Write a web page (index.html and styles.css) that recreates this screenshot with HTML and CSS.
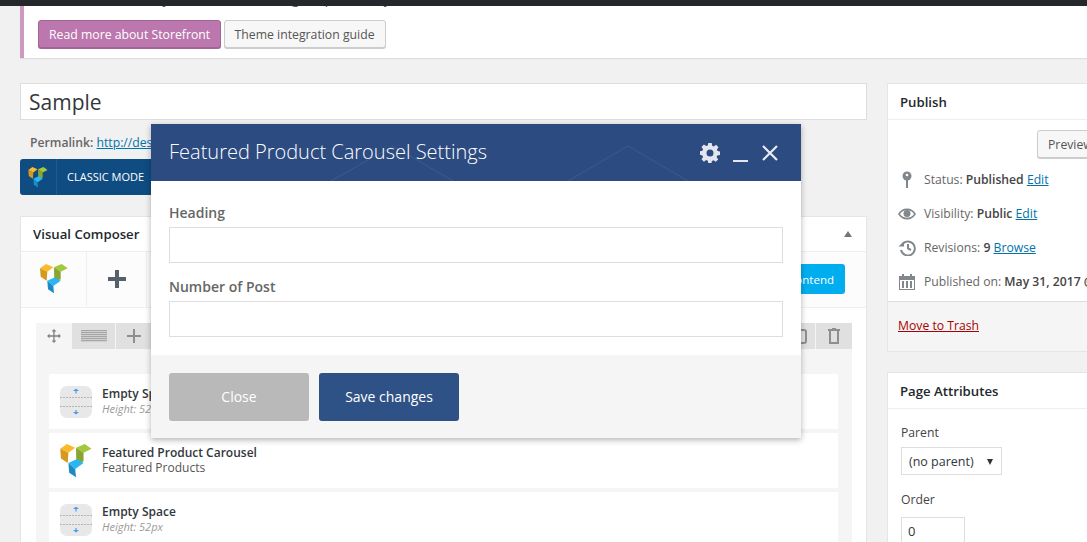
FILE: index.html
```html
<!DOCTYPE html>
<html lang="en">
<head>
    <meta charset="UTF-8">
    <title>Edit Page</title>
    <link rel="stylesheet" href="styles.css">
</head>
<body>
    <div class="adminbar"></div>

    <!-- Theme notice -->
    <div class="notice">
        <div class="notice-clip"><p>While this theme may not include the design in product by default</p></div>
        <a class="btn btn-purple">Read more about Storefront</a>
        <a class="btn">Theme integration guide</a>
    </div>

    <div class="columns">
        <!-- Main column -->
        <div class="main">
            <div class="title-box">Sample</div>
            <div class="permalink"><b>Permalink:</b> <a>http://design.example.com/sample/</a></div>
            <div class="classic-btn">
                <span class="classic-logo">
                    <svg width="20" height="21" viewBox="0 0 28 30"><use href="#vc-logo"/></svg>
                </span>
                <span class="classic-text">CLASSIC MODE</span>
            </div>

            <div class="vc-box">
                <div class="box-head vc-head">
                    <span>Visual Composer</span>
                    <i class="arrow-up"></i>
                </div>
                <div class="vc-toolbar">
                    <span class="vc-tool-logo">
                        <svg width="28" height="30" viewBox="0 0 28 30"><use href="#vc-logo"/></svg>
                    </span>
                    <span class="vc-tool-add">
                        <svg width="18" height="18" viewBox="0 0 18 18"><path d="M7 0h4v7h7v4h-7v7H7v-7H0V7h7z" fill="#55606b"/></svg>
                    </span>
                    <a class="vc-frontend">Frontend</a>
                </div>
                <div class="vc-content">
                    <div class="vc-panel">
                        <div class="vc-tabs">
                            <span class="vc-tab vc-tab-move">
                                <svg width="14" height="14" viewBox="0 0 14 14" fill="none" stroke="#7f7f85" stroke-width="1.300"><path d="M7 1v12M1 7h12"/><path d="M5.500 2.500L7 1l1.500 1.500M5.500 11.500L7 13l1.500-1.500M2.500 5.500L1 7l1.500 1.500M11.500 5.500L13 7l-1.500 1.500"/></svg>
                            </span>
                            <span class="vc-tab vc-tab-lines"><i></i></span>
                            <span class="vc-tab vc-tab-plus">
                                <svg width="14" height="14" viewBox="0 0 14 14"><path d="M6 0h2v6h6v2H8v6H6V8H0V6h6z" fill="#8a8f94"/></svg>
                            </span>
                            <span class="vc-tab vc-tab-copy">
                                <svg width="12" height="16" viewBox="0 0 12 16" fill="none" stroke="#8a8f94" stroke-width="2"><rect x="1" y="2" width="10" height="13" rx="2"/></svg>
                            </span>
                            <span class="vc-tab vc-tab-trash">
                                <svg width="12" height="16" viewBox="0 0 12 16" fill="none" stroke="#8a8f94" stroke-width="2"><path d="M0 2h12M4 1h4M2 3v12h8V3"/></svg>
                            </span>
                        </div>
                        <div class="vc-row">
                            <span class="space-icon"><i class="up"></i><i class="down"></i></span>
                            <div class="vc-row-text"><b>Empty Space</b><em>Height: 52px</em></div>
                        </div>
                        <div class="vc-row">
                            <span class="row-logo">
                                <svg width="32" height="34" viewBox="0 0 28 30"><use href="#vc-logo"/></svg>
                            </span>
                            <div class="vc-row-text"><b>Featured Product Carousel</b><span>Featured Products</span></div>
                        </div>
                        <div class="vc-row">
                            <span class="space-icon"><i class="up"></i><i class="down"></i></span>
                            <div class="vc-row-text"><b>Empty Space</b><em>Height: 52px</em></div>
                        </div>
                    </div>
                </div>
            </div>
        </div>

        <!-- Sidebar -->
        <div class="side">
            <div class="side-box">
                <div class="box-head">Publish</div>
                <div class="publish-top"><a class="btn btn-preview">Preview Changes</a></div>
                <div class="misc">
                    <svg width="12" height="18" viewBox="0 0 12 18"><circle cx="6" cy="5" r="4.500" fill="#82878c"/><circle cx="6" cy="4" r="1.300" fill="#fff"/><path d="M5 8h2v9H5z" fill="#82878c"/></svg>
                    <span>Status: <b>Published</b> <a>Edit</a></span>
                </div>
                <div class="misc">
                    <svg width="18" height="12" viewBox="0 0 18 12"><path d="M0 6c2-3.500 5-5.500 9-5.500S16 2.500 18 6c-2 3.500-5 5.500-9 5.500S2 9.500 0 6z" fill="#82878c"/><path d="M2 6c1.500-2 3-3.500 7-3.500S14.500 4 16 6c-1.500 2-3 3.500-7 3.500S3.500 8 2 6z" fill="#fff"/><circle cx="9" cy="5.500" r="3.500" fill="#82878c"/></svg>
                    <span>Visibility: <b>Public</b> <a>Edit</a></span>
                </div>
                <div class="misc">
                    <svg width="18" height="16" viewBox="0 0 18 16" fill="none" stroke="#82878c" stroke-width="2"><path d="M3.500 5.500A7 7 0 1 1 3 10"/><path d="M10 4v4.500l3 1.500"/><path d="M0.500 6.500h5.500V1.500z" fill="#82878c" stroke="none"/></svg>
                    <span>Revisions: <b>9</b> <a>Browse</a></span>
                </div>
                <div class="misc">
                    <svg width="16" height="16" viewBox="0 0 16 16" fill="#82878c"><path d="M0 2h3V0h2v2h6V0h2v2h3v14H0zm1 4v9h14V6z"/><path d="M3 7h2v7H3zM7 7h2v7H7zM11 7h2v7h-2z"/></svg>
                    <span>Published on: <b>May 31, 2017 @ 10:22</b></span>
                </div>
                <div class="publish-foot"><a class="trash">Move to Trash</a></div>
            </div>

            <div class="side-box attrs">
                <div class="box-head">Page Attributes</div>
                <div class="attrs-body">
                    <div class="attr-label">Parent</div>
                    <div class="fake-select">(no parent)<i></i></div>
                    <div class="attr-label order-label">Order</div>
                    <div class="fake-input">0</div>
                </div>
            </div>
        </div>
    </div>

    <!-- Settings dialog -->
    <div class="modal">
        <div class="modal-head">
            <svg class="modal-pattern" width="650" height="57" viewBox="0 0 650 57" fill="none" stroke="#3d5b8e"><path d="M180 57l62-35 60 35M417 57l60-35 60 35"/></svg>
            <h2>Featured Product Carousel Settings</h2>
            <div class="modal-icons">
                <svg width="20" height="20" viewBox="0 0 20 20"><path fill="#e3e6ee" fill-rule="evenodd" d="M8.300 0h3.400l.5 2.700 1.600.7 2.300-1.600 2.400 2.400-1.600 2.300.7 1.600 2.400.5v3.400l-2.700.5-.7 1.600 1.600 2.300-2.400 2.400-2.300-1.600-1.600.7-.5 2.600H8.300l-.5-2.700-1.600-.7-2.300 1.600-2.400-2.400 1.600-2.300-.7-1.600L0 11.700V8.300l2.400-.5.7-1.600-1.600-2.300 2.400-2.400 2.300 1.600 1.600-.7zM10 6.500a3.500 3.500 0 1 0 0 7 3.500 3.500 0 0 0 0-7z"/></svg>
                <i class="icon-min"></i>
                <svg width="16" height="16" viewBox="0 0 16 16" stroke="#e8ebf2" stroke-width="2.200"><path d="M1 1l14 14M15 1L1 15"/></svg>
            </div>
        </div>
        <div class="modal-body">
            <label>Heading</label>
            <div class="modal-input"></div>
            <label>Number of Post</label>
            <div class="modal-input"></div>
        </div>
        <div class="modal-foot">
            <a class="modal-btn modal-close">Close</a>
            <a class="modal-btn modal-save">Save changes</a>
        </div>
    </div>

    <!-- Visual Composer logo used in several places -->
    <svg class="defs" width="0" height="0">
        <symbol id="vc-logo" viewBox="0 0 28 30">
            <path d="M0 4.300L6 0l7.300 3.300-6 4.400z" fill="#fdb92c"/>
            <path d="M0 4.300l7.300 3.400-.6 9-6-4z" fill="#d39a1f"/>
            <path d="M14 3.300L21.700 0l6 4.300-7 3.400z" fill="#a2c83e"/>
            <path d="M14 3.300l6.700 4.400v7.600L14.300 18z" fill="#8aa52f"/>
            <path d="M7.300 16.700l7.700-3.400 5.700 3.400-7.400 5.300z" fill="#2bb6f0"/>
            <path d="M7.300 16.700l6 5.300.7 7.300-6-4z" fill="#1a8bc4"/>
        </symbol>
    </svg>
</body>
</html>
```

FILE: styles.css
```css
body {
    margin: 0;
    height: 542px;
    overflow: hidden;
    position: relative;
    background-color: #f1f1f1;
    font-family: "Open Sans", sans-serif;
    font-size: 13px;
    line-height: 18px;
    color: #444;
}

a {
    color: #0073aa;
    text-decoration: underline;
}

b {
    font-weight: 600;
}

.defs {
    position: absolute;
}

.adminbar {
    height: 6px;
    background-color: #23282d;
}

/* Notice */
.notice {
    margin-left: 20px;
    height: 52px;
    width: 1100px;
    box-sizing: border-box;
    padding-left: 14px;
    background-color: #fff;
    border-left: 4px solid #cc99c2;
    box-shadow: 0 1px 1px rgba(0, 0, 0, 0.08);
}

.notice-clip {
    height: 14px;
    overflow: hidden;
}

.notice-clip p {
    margin: -16px 0 0;
    white-space: nowrap;
}

.btn {
    display: inline-block;
    box-sizing: border-box;
    height: 28px;
    line-height: 27px;
    padding: 0 10px;
    border: 1px solid #ccc;
    border-radius: 3px;
    background-color: #f7f7f7;
    box-shadow: 0 1px 0 #ccc;
    color: #555;
    font-size: 12.250px;
    text-decoration: none;
    vertical-align: top;
    white-space: nowrap;
}

.btn-purple {
    margin-right: -1px;
    background-color: #bb77ae;
    border-color: #a36597;
    box-shadow: 0 1px 0 #a36597;
    color: #fff;
}

/* Columns */
.columns {
    display: flex;
    gap: 20px;
    margin: 25px 0 0 20px;
    width: 1100px;
}

.main {
    width: 847px;
    flex: none;
}

.side {
    width: 260px;
    flex: none;
}

.title-box {
    height: 37px;
    line-height: 37px;
    box-sizing: border-box;
    padding-left: 8px;
    background-color: #fff;
    border: 1px solid #ddd;
    font-size: 21px;
    color: #32373c;
}

.permalink {
    margin: 14px 0 -1px 10px;
    color: #666;
    font-size: 12.200px;
    white-space: nowrap;
}

.classic-btn {
    display: flex;
    align-items: stretch;
    width: 160px;
    height: 36px;
    margin-top: 8px;
    background-color: #0f4c81;
    border-radius: 3px;
    color: #fff;
    font-size: 11px;
}

.classic-logo {
    width: 36px;
    display: flex;
    align-items: center;
    justify-content: center;
    border-right: 1px solid #1c5a90;
}

.classic-text {
    line-height: 36px;
    padding-left: 10px;
}

/* Visual Composer box */
.vc-box {
    margin-top: 21px;
    height: 340px;
    background-color: #fff;
    border: 1px solid #e5e5e5;
    box-sizing: border-box;
}

.box-head {
    position: relative;
    height: 35px;
    line-height: 37px;
    padding-left: 12px;
    border-bottom: 1px solid #eee;
    font-size: 13.200px;
    font-weight: 600;
    color: #23282d;
}

.vc-head {
    height: 34px;
    line-height: 34px;
}

.arrow-up {
    position: absolute;
    right: 14px;
    top: 14px;
    border: 4px solid transparent;
    border-top: 0;
    border-bottom: 6px solid #72777c;
}

.vc-toolbar {
    display: flex;
    height: 56px;
    box-sizing: border-box;
    background-color: #fcfcfc;
    border-bottom: 1px solid #f0f0f0;
}

.vc-tool-logo,
.vc-tool-add {
    display: flex;
    align-items: center;
    justify-content: center;
    padding-bottom: 2px;
    box-sizing: border-box;
    border-right: 1px solid #f0f0f0;
}

.vc-tool-logo {
    width: 66px;
}

.vc-tool-add {
    width: 60px;
}

.vc-frontend {
    margin: 12px 21px 0 auto;
    height: 30px;
    line-height: 32px;
    padding: 0 11px;
    background-color: #00aef0;
    border-radius: 3px;
    color: #fff;
    font-size: 11.500px;
    text-decoration: none;
}

.vc-content {
    padding: 15px 14px 0 15px;
}

.vc-panel {
    background-color: #f5f5f5;
    height: 220px;
}

.vc-tabs {
    display: flex;
    height: 26px;
    margin-bottom: 25px;
}

.vc-tab {
    display: flex;
    align-items: center;
    justify-content: center;
    background-color: #e0e0e0;
    margin-right: 1px;
}

.vc-tab-move {
    width: 36px;
    margin-right: 0;
    background-color: transparent;
}

.vc-tab-lines {
    width: 43px;
}

.vc-tab-lines i {
    width: 26px;
    height: 12px;
    background: repeating-linear-gradient(#a5a5a5 0 1px, #d0d0d0 1px 2px);
}

.vc-tab-plus {
    width: 35px;
}

.vc-tab-copy {
    width: 29px;
    margin-left: auto;
}

.vc-tab-trash {
    width: 36px;
    margin-right: 0;
}

.vc-row {
    display: flex;
    align-items: center;
    height: 55px;
    margin: 0 14px 4px 13px;
    padding-left: 11px;
    background-color: #fff;
}

.vc-row-text {
    margin: -2px 0 0 10px;
    line-height: 15px;
    font-size: 12px;
    color: #555;
}

.vc-row-text b {
    display: block;
    color: #32373c;
    font-weight: 600;
}

.vc-row-text em {
    display: block;
    color: #999;
    font-size: 11px;
}

.row-logo {
    width: 32px;
    display: flex;
}

.space-icon {
    position: relative;
    width: 32px;
    height: 32px;
    border-radius: 7px;
    background:
        repeating-linear-gradient(90deg, #b5b5b5 0 2px, transparent 2px 3px) 0 11px / 100% 1px no-repeat,
        repeating-linear-gradient(90deg, #b5b5b5 0 2px, transparent 2px 3px) 0 20px / 100% 1px no-repeat,
        #e8e8e8;
}

.space-icon i {
    position: absolute;
    left: 13px;
    width: 6px;
    height: 5px;
    background-color: #4a9bee;
}

.space-icon .up {
    top: 3px;
    clip-path: polygon(50% 0, 100% 50%, 60% 50%, 60% 100%, 40% 100%, 40% 50%, 0 50%);
}

.space-icon .down {
    bottom: 3px;
    clip-path: polygon(40% 0, 60% 0, 60% 50%, 100% 50%, 50% 100%, 0 50%, 40% 50%);
}

/* Sidebar */
.side-box {
    background-color: #fff;
    border: 1px solid #e5e5e5;
    box-sizing: border-box;
}

.publish-top {
    height: 43px;
    padding: 10px 0 0 149px;
    box-sizing: border-box;
}

.misc {
    display: flex;
    align-items: center;
    height: 34px;
    padding-left: 10px;
}

.misc svg {
    width: 18px;
    flex: none;
    margin-right: 8px;
}

.misc span {
    white-space: nowrap;
    font-size: 12.200px;
    color: #666;
}

.misc b {
    color: #444;
}

.publish-foot {
    margin-top: 2px;
    height: 50px;
    box-sizing: border-box;
    padding: 15px 0 0 10px;
    background-color: #f5f5f5;
    border-top: 1px solid #ddd;
    font-size: 12.200px;
}

.trash {
    color: #a00;
}

.attrs {
    margin-top: 20px;
    height: 200px;
}

.attrs-body {
    padding: 15px 0 0 13px;
}

.attr-label {
    color: #444;
    font-size: 12.200px;
}

.order-label {
    margin-top: 16px;
}

.fake-select {
    position: relative;
    width: 101px;
    height: 28px;
    box-sizing: border-box;
    margin-top: 5px;
    padding-left: 7px;
    line-height: 27px;
    background-color: #fff;
    border: 1px solid #ddd;
    font-size: 12.500px;
    color: #32373c;
}

.fake-select i {
    position: absolute;
    right: 8px;
    top: 11px;
    border: 3.500px solid transparent;
    border-bottom: 0;
    border-top: 6px solid #333;
}

.fake-input {
    width: 64px;
    height: 32px;
    box-sizing: border-box;
    margin-top: 8px;
    padding-left: 6px;
    line-height: 26px;
    background-color: #fff;
    border: 1px solid #ddd;
    color: #32373c;
}

/* Modal */
.modal {
    position: absolute;
    left: 151px;
    top: 124px;
    width: 650px;
    background-color: #fff;
    box-shadow: 0 2px 6px rgba(0, 0, 0, 0.3);
}

.modal-head {
    position: relative;
    display: flex;
    align-items: center;
    justify-content: space-between;
    height: 57px;
    padding: 0 23px 0 18px;
    background-color: #2c4b80;
}

.modal-pattern {
    position: absolute;
    left: 0;
    top: 0;
}

.modal-head h2 {
    position: relative;
    margin: -2px 0 0;
    font-size: 20px;
    font-weight: 300;
    color: #fff;
}

.modal-icons {
    position: relative;
    display: flex;
    align-items: center;
    gap: 13px;
}

.icon-min {
    width: 15px;
    height: 2px;
    margin: 16px 1px 0 0;
    background-color: #e3e6ee;
}

.modal-body {
    height: 174px;
    box-sizing: border-box;
    padding: 23px 18px 0;
}

.modal-body label {
    display: block;
    font-size: 14px;
    line-height: 18px;
    font-weight: 600;
    color: #666;
    margin-bottom: 5px;
}

.modal-input {
    height: 36px;
    box-sizing: border-box;
    border: 1px solid #ddd;
    margin-bottom: 15px;
}

.modal-foot {
    display: flex;
    gap: 10px;
    height: 83px;
    box-sizing: border-box;
    padding: 18px 18px 0;
    background-color: #f5f5f5;
}

.modal-btn {
    width: 140px;
    height: 48px;
    line-height: 48px;
    border-radius: 3px;
    text-align: center;
    font-size: 14px;
    color: #fff;
    text-decoration: none;
}

.modal-close {
    background-color: #b9b9b9;
}

.modal-save {
    background-color: #2f5286;
}
```
